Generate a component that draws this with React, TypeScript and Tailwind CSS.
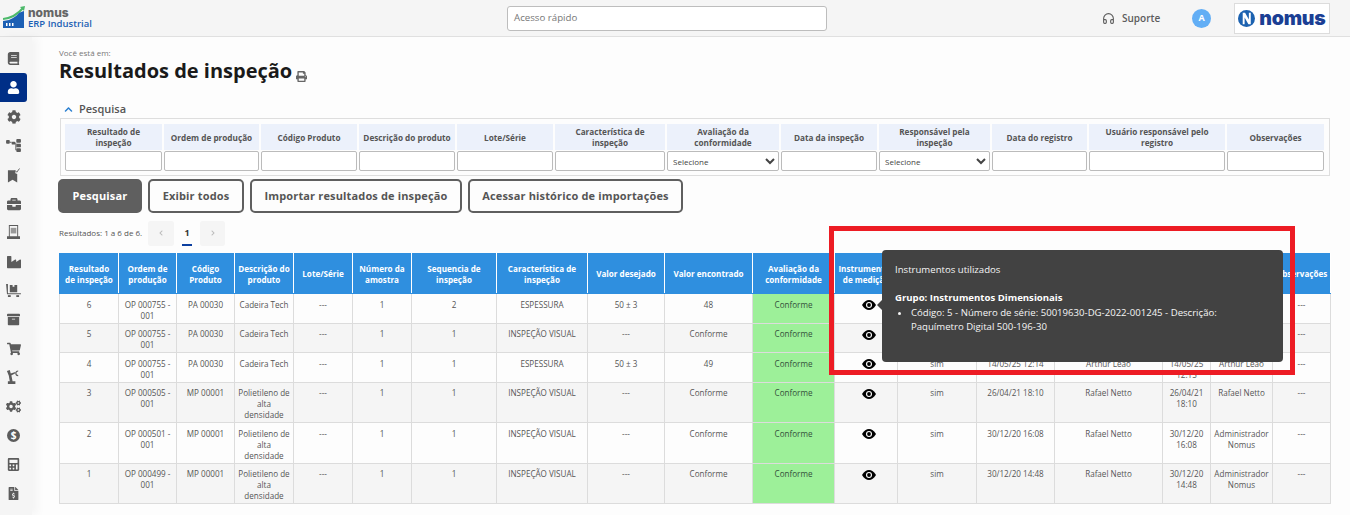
import React from "react";
import { FaBook, FaUser, FaCog, FaBriefcase, FaIndustry, FaArchive, FaShoppingCart, FaCogs, FaCalculator, FaFileInvoiceDollar, FaPrint, FaChevronUp, FaChevronLeft, FaChevronRight } from "react-icons/fa";
import { Headphones } from "lucide-react";

const Flow = () => (
  <svg viewBox="0 0 16 14" className="w-[15px] h-[13px]" fill="currentColor">
    <rect x="0" y="1" width="4" height="4" rx="1" /><rect x="6" y="3" width="4" height="3" rx="1" />
    <rect x="11" y="0" width="5" height="4" rx="1" /><rect x="11" y="5" width="5" height="4" rx="1" /><rect x="11" y="10" width="5" height="4" rx="1" />
    <path d="M4 3h2v1H4zM10 4h1v8h-1z" />
  </svg>
);
const BookCheck = () => (
  <svg viewBox="0 0 14 16" className="w-[13px] h-[16px]" fill="currentColor">
    <path d="M1 3h8v3l2 1v9l-5-3-5 3z" /><path d="M8.500 3l2 2 3-4" fill="none" stroke="currentColor" strokeWidth="1" />
  </svg>
);
const Kiosk = () => (
  <svg viewBox="0 0 14 16" className="w-[13px] h-[15px]" fill="currentColor">
    <path fillRule="evenodd" d="M2 0h10v12h2v3H0v-3h2zm1 1v11h8V1z" /><rect x="4" y="3" width="6" height="6" opacity=".6" />
  </svg>
);
const Pallet = () => (
  <svg viewBox="0 0 16 14" className="w-[15px] h-[13px]" fill="currentColor">
    <path d="M4 1h3v2h2V1h3v8H4z" /><path d="M0 0h2v10h14v1H1z" /><rect x="2" y="12" width="3" height="2" /><rect x="11" y="12" width="3" height="2" />
  </svg>
);
const RobotArm = () => (
  <svg viewBox="0 0 16 16" className="w-[15px] h-[15px]" fill="currentColor">
    <path d="M1 1l3-1 2 7 1 5h3v3H2v-3h2L3 6z" /><path d="M4 4l6-2v1.500L5 6z" /><path d="M13 1a2.500 2.500 0 1 0 0 5" fill="none" stroke="currentColor" strokeWidth="1.200" />
  </svg>
);
const Dollar = () => (
  <div className="w-[13px] h-[13px] rounded-full bg-[#5c5c5c] text-white text-[10px] font-bold leading-[13px] text-center">$</div>
);
const Eye = () => (
  <svg viewBox="0 0 14 10" className="ml-[24px] mt-[1.500px] w-[14px] h-[10px]">
    <path d="M0 5C2 1.500 4.500 0 7 0s5 1.500 7 5c-2 3.500-4.500 5-7 5S2 8.500 0 5z" fill="#000" />
    <circle cx="7" cy="5" r="3" fill="#fff" />
    <circle cx="7" cy="5" r="1.900" fill="#000" />
  </svg>
);

const sideIcons: React.ReactNode[] = [
  <FaBook size={13} />, <FaUser size={13} />, <FaCog size={14} />, <Flow />, <BookCheck />, <FaBriefcase size={14} />, <Kiosk />,
  <FaIndustry size={14} />, <Pallet />, <FaArchive size={13} />, <FaShoppingCart size={14} />, <RobotArm />, <FaCogs size={15} />,
  <Dollar />, <FaCalculator size={13} />, <FaFileInvoiceDollar size={13} />,
];

const filters: [string, string][] = [
  ["Resultado de\ninspeção", "input"], ["Ordem de produção", "input"], ["Código Produto", "input"], ["Descrição do produto", "input"],
  ["Lote/Série", "input"], ["Característica de inspeção", "input"], ["Avaliação da conformidade", "select"], ["Data da inspeção", "input"],
  ["Responsável pela inspeção", "select"], ["Data do registro", "input"], ["Usuário responsável pelo registro", "input"], ["Observações", "input"],
];

const widths = [59, 58, 58, 59, 59, 59, 85, 91, 77, 88, 82, 63, 79, 78, 108, 48, 62, 58];
const headers = ["Resultado\nde inspeção", "Ordem de produção", "Código Produto", "Descrição do produto", "Lote/Série", "Número da amostra", "Sequencia de inspeção", "Característica de inspeção", "Valor desejado", "Valor encontrado", "Avaliação da conformidade", "Instrumentos de medição", "Medição conforme", "Data da inspeção", "Responsável pela inspeção", "Data do registro", "Usuário responsável", "Observações"];

type Row = { r: string; op: string; cod: string; desc: string; seq: string; car: string; des: string; enc: string; di: string; resp: string; dr: string; ur: string };
const rows: Row[] = [
  { r: "6", op: "OP 000755 - 001", cod: "PA 00030", desc: "Cadeira Tech", seq: "2", car: "ESPESSURA", des: "50 ± 3", enc: "48", di: "14/05/25 12:14", resp: "Arthur Leão", dr: "14/05/25 12:15", ur: "Arthur Leão" },
  { r: "5", op: "OP 000755 - 001", cod: "PA 00030", desc: "Cadeira Tech", seq: "1", car: "INSPEÇÃO VISUAL", des: "---", enc: "Conforme", di: "14/05/25 12:14", resp: "Arthur Leão", dr: "14/05/25 12:15", ur: "Arthur Leão" },
  { r: "4", op: "OP 000755 - 001", cod: "PA 00030", desc: "Cadeira Tech", seq: "1", car: "ESPESSURA", des: "50 ± 3", enc: "49", di: "14/05/25 12:14", resp: "Arthur Leão", dr: "14/05/25 12:15", ur: "Arthur Leão" },
  { r: "3", op: "OP 000505 - 001", cod: "MP 00001", desc: "Polietileno de alta densidade", seq: "1", car: "INSPEÇÃO VISUAL", des: "---", enc: "Conforme", di: "26/04/21 18:10", resp: "Rafael Netto", dr: "26/04/21 18:10", ur: "Rafael Netto" },
  { r: "2", op: "OP 000501 - 001", cod: "MP 00001", desc: "Polietileno de alta densidade", seq: "1", car: "INSPEÇÃO VISUAL", des: "---", enc: "Conforme", di: "30/12/20 16:08", resp: "Rafael Netto", dr: "30/12/20 16:08", ur: "Administrador Nomus" },
  { r: "1", op: "OP 000499 - 001", cod: "MP 00001", desc: "Polietileno de alta densidade", seq: "1", car: "INSPEÇÃO VISUAL", des: "---", enc: "Conforme", di: "30/12/20 14:48", resp: "Rafael Netto", dr: "30/12/20 14:48", ur: "Administrador Nomus" },
];

const Td = ({ children, className = "" }: { children: React.ReactNode; className?: string }) => (
  <td className={`border border-[#dcdcdc] px-[3px] pt-[4.500px] pb-[2px] align-top text-center ${className}`}>{children}</td>
);

const btn = "h-[34px] rounded-[5px] border-2 border-[#5f5f5f] text-[11px] font-bold tracking-[0.15px] flex items-center justify-center";

export default function App() {
  return (
    <div className="relative w-[1350px] h-[515px] overflow-hidden bg-[#fdfdfd] font-['Open_Sans',sans-serif] text-[#444]">
      {/* Top bar */}
      <header className="h-[37px] bg-[#f5f5f5] border-b border-[#e0e0e0] flex items-center">
        <div className="w-[507px] pl-[3px] flex items-center gap-[3px]">
          <svg viewBox="0 0 22 22" className="w-[22px] h-[22px] mb-[3px]">
            <path d="M0 13C9 12 15 8 20 2" fill="none" stroke="#4cb96a" strokeWidth="2" />
            <path d="M17 1l5-1-1 5z" fill="#4cb96a" />
            <path d="M0 15l6-1 4-2 3-2 3-3 2-1 3-1v17H0z" fill="#1c5fb4" />
            <rect x="3" y="17" width="1.500" height="3" fill="#fff" /><rect x="6" y="17" width="1.500" height="3" fill="#fff" /><rect x="9" y="17" width="1.500" height="3" fill="#fff" />
          </svg>
          <div className="flex flex-col mt-[1px]">
            <span className="text-[12px] font-extrabold leading-[10px] text-[#666] font-['Inter',sans-serif]">nomus</span>
            <span className="text-[9.500px] font-semibold leading-[12px] text-[#1c5fb4]">ERP Industrial</span>
          </div>
        </div>
        <div className="w-[320px] h-[25px] bg-white border border-[#bdbdbd] rounded-[3px] flex items-center pl-[6px] text-[9.700px] text-[#777]">Acesso rápido</div>
        <div className="ml-[275px] flex items-center text-[#5c5c5c]">
          <Headphones size={13} strokeWidth={2} />
          <span className="ml-[7px] text-[10px] font-semibold">Suporte</span>
        </div>
        <div className="ml-[32px] w-[19px] h-[19px] rounded-full bg-[#62aef5] text-white text-[9px] font-bold flex items-center justify-center">A</div>
        <div className="ml-[23px] w-[96px] h-[31px] bg-white border border-[#dcdcdc] flex items-center pl-[3px] gap-[4px]">
          <svg viewBox="0 0 18 18" className="w-[17px] h-[17px] shrink-0">
            <circle cx="9" cy="9" r="9" fill="#1c62b0" />
            <path d="M5 15V3h2.500l4 7V3H13.500v12H11L7 8v7z" fill="#fff" />
          </svg>
          <span className="text-[19.500px] leading-[20px] font-black text-[#1b3f94] font-['Inter',sans-serif] tracking-[-0.2px]">nomus</span>
        </div>
      </header>

      <div className="flex h-[478px]">
        {/* Sidebar */}
        <aside className="w-[32px] shrink-0 bg-[#f5f5f5] flex flex-col pt-[7px] text-[#5c5c5c] shadow-[6px_0_8px_rgba(0,0,0,0.035)]">
          {sideIcons.map((ic, i) => (
            <div key={i} className={`w-[27px] h-[29px] shrink-0 flex items-center justify-center ${i === 1 ? "bg-[#002f87] text-white rounded-r-[3px]" : ""}`}>{ic}</div>
          ))}
        </aside>

        {/* Main */}
        <main className="flex-1 min-w-0 pl-[27px] pt-[10px]">
          <div className="text-[8px] leading-[11px] text-[#777]">Você está em:</div>
          <div className="mt-[-2px] flex items-end h-[30px]">
            <h1 className="text-[20px] leading-[30px] font-bold text-[#1a1a1a]">Resultados de inspeção</h1>
            <FaPrint size={11} className="ml-[4px] mb-[4px] text-[#666]" />
          </div>
          <div className="mt-[17px] ml-[5px] flex items-center h-[12px]">
            <FaChevronUp size={9} className="text-[#2a7fd0]" />
            <span className="ml-[6px] text-[11px] font-semibold text-[#555]">Pesquisa</span>
          </div>

          <div className="mt-[3px] ml-[1px] w-[1270px] h-[58px] border border-[#dedede] pt-[5px] pl-[4px]">
            <div className="grid grid-cols-[97px_95px_96px_96px_96px_110px_112px_96px_111px_95px_136px_97px] gap-x-[2px] gap-y-[1px] grid-rows-[26px_20px]">
              {filters.map(([t]) => (
                <div key={t} className="bg-[#ecf1fb] flex items-center justify-center text-center whitespace-pre-line text-[8.200px] leading-[11px] font-bold text-[#555] px-[2px]">{t}</div>
              ))}
              {filters.map(([t, k]) =>
                k === "select" ? (
                  <select key={t} className="h-[20px] w-full bg-white border border-[#bbb] rounded-[2px] text-[8px] text-[#444] pl-[1px]">
                    <option>Selecione</option>
                  </select>
                ) : (
                  <input key={t} className="h-[20px] w-full bg-white border border-[#bbb] rounded-[2px]" />
                )
              )}
            </div>
          </div>

          <div className="mt-[3px] ml-[-1px] flex gap-[6px]">
            <div className={`${btn} w-[84px] bg-[#5f5f5f] text-white`}>Pesquisar</div>
            <div className={`${btn} w-[96px] text-[#555]`}>Exibir todos</div>
            <div className={`${btn} w-[212px] text-[#555]`}>Importar resultados de inspeção</div>
            <div className={`${btn} w-[215px] text-[#555]`}>Acessar histórico de importações</div>
          </div>

          <div className="mt-[7px] flex items-center h-[26px]">
            <span className="w-[89px] text-[8px] text-[#555]">Resultados: 1 a 6 de 6.</span>
            <div className="w-[26px] h-[25px] rounded-[3px] bg-[#f5f5f5] flex items-center justify-center text-[#bbb]"><FaChevronLeft size={6} /></div>
            <div className="w-[26px] h-[26px] flex items-center justify-center relative text-[9px] font-bold text-[#333]">
              1<span className="absolute bottom-0 left-[8px] w-[10px] h-[2px] bg-[#0c3fa0]" />
            </div>
            <div className="w-[25px] h-[25px] rounded-[3px] bg-[#f5f5f5] flex items-center justify-center text-[#bbb]"><FaChevronRight size={6} /></div>
          </div>

          <table className="mt-[7px] w-[1271px] table-fixed border-collapse text-[8.100px] leading-[11px] text-[#555]">
            <colgroup>
              {widths.map((w, i) => <col key={i} style={{ width: w }} />)}
            </colgroup>
            <thead>
              <tr className="h-[40px]">
                {headers.map((h) => (
                  <th key={h} className="bg-[#2f8fdf] border border-[#2f8fdf] border-r-white text-white font-bold text-[8.100px] leading-[11px] px-[2px] text-center align-middle whitespace-pre-line overflow-hidden">{h}</th>
                ))}
              </tr>
            </thead>
            <tbody>
              {rows.map((r, i) => (
                <tr key={r.r} className={i % 2 === 1 ? "bg-[#f5f5f5]" : "bg-[#fdfdfd]"}>
                  <Td>{r.r}</Td>
                  <Td>{r.op}</Td>
                  <Td>{r.cod}</Td>
                  <Td>{r.desc}</Td>
                  <Td>---</Td>
                  <Td>1</Td>
                  <Td>{r.seq}</Td>
                  <Td>{r.car}</Td>
                  <Td>{r.des}</Td>
                  <Td>{r.enc}</Td>
                  <Td className="bg-[#9df099] border-[#b5b5b5] text-[#33503a]">Conforme</Td>
                  <Td><Eye /></Td>
                  <Td>sim</Td>
                  <Td>{r.di}</Td>
                  <Td>{r.resp}</Td>
                  <Td>{r.dr}</Td>
                  <Td>{r.ur}</Td>
                  <Td>---</Td>
                </tr>
              ))}
            </tbody>
          </table>
        </main>
      </div>

      {/* Tooltip */}
      <div className="absolute left-[882px] top-[250px] w-[401px] h-[112px] bg-[#424242] rounded-[4px] px-[13px] pt-[13px] text-[9.600px] leading-[14px] text-[#f5f5f5]">
        <span className="absolute left-[-5px] top-[50px] w-0 h-0 border-y-[5px] border-y-transparent border-r-[5px] border-r-[#424242]" />
        <div>Instrumentos utilizados</div>
        <div className="mt-[14px] font-bold text-white">Grupo: Instrumentos Dimensionais</div>
        <ul className="list-disc pl-[16px] pr-[45px] mt-[1px]">
          <li>Código: 5 - Número de série: 50019630-DG-2022-001245 - Descrição: Paquímetro Digital 500-196-30</li>
        </ul>
      </div>

      {/* Annotation */}
      <div className="absolute left-[829px] top-[226px] w-[466px] h-[149px] border-[5px] border-[#ed1c24] pointer-events-none" />
    </div>
  );
}
